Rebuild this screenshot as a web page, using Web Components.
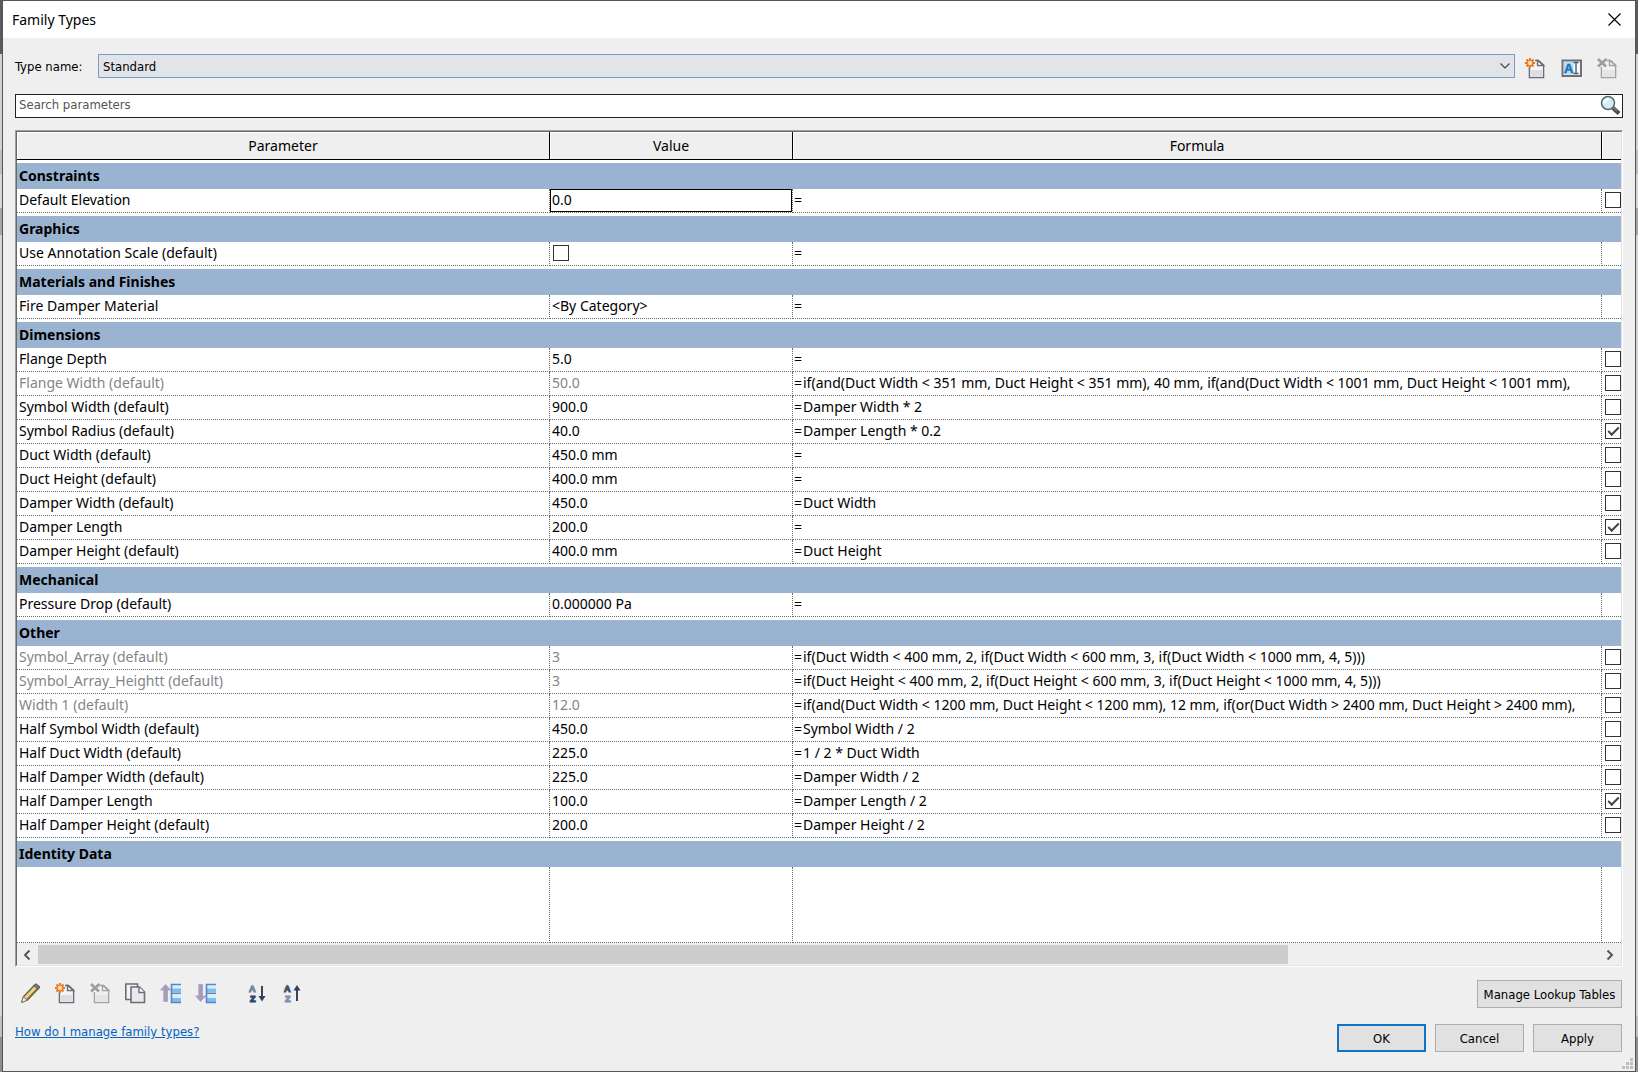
<!DOCTYPE html>
<html lang="en">
<head>
<meta charset="utf-8">
<meta name="viewport" content="width=device-width, initial-scale=1">
<title>Family Types</title>
<style>
  :root {
    --face: #efefef;
    --band: #9ab3d0;
    --line: #6a6a6a;
    --ui-font: "DejaVu Sans Condensed", "DejaVu Sans", sans-serif;
    --grid-font: "Noto Sans", "Open Sans", sans-serif;
  }

  body {
    background: linear-gradient(#5d5a5e 0 54px, #d2d2d2 54px 150px, #bdbdc8 150px 174px, #d8d8d8 174px 208px, #a6a6a6 208px 235px, #d6d6d6 235px 1016px, #c0c0c0 1016px 1037px, #8e8e8e 1037px);
    box-sizing: border-box;
    font: 13px/16px var(--ui-font);
    color: #000;
    margin: 0;
    min-height: 100vh;
    padding: 0 2px;
  }
</style>
</head>
<body>

<family-dialog>
  <span slot="title">Family Types</span>
  <type-bar></type-bar>
  <search-box></search-box>
  <param-grid></param-grid>
  <tool-strip>
    <push-button slot="end" wide>Manage Lookup Tables</push-button>
  </tool-strip>
  <dialog-footer>
    <a slot="help" href="#help">How do I manage family types?</a>
    <push-button default>OK</push-button>
    <push-button>Cancel</push-button>
    <push-button>Apply</push-button>
  </dialog-footer>
</family-dialog>

<script>
/* === ICONS ==================================================================================== */

const sheet = (stroke, light, dark) => /* html */ `
  <path d="M4.5 7.5V19.5H18.5V7L13.5 2.500H10" fill="none" stroke="${stroke}" stroke-width="1.6"/>
  <path d="M5.300 8H10L12 4 17.700 8V18.700H5.300Z" fill="${light}"/>
  <path d="M5.300 12H17.700V18.700H5.300Z" fill="${dark}"/>
  <path d="M12.500 2.500V7.500H18.500Z" fill="#fff" stroke="${stroke}" stroke-width="1.400"/>`;

const rows = /* html */ `
  <path d="M12 1.500H21V5.500H12Z M12 11H21V15H12Z" fill="#d8f0fc"/>
  <path d="M12 5.500H21V9H12Z M12 15H21V19H12Z" fill="#7fbdf0"/>
  <path d="M21 1.500H11.500V19.500H21M11.500 10.300H21" fill="none" stroke="#5a86c4" stroke-width="1.600"/>`;

const letters = (top, bottom) => /* html */ `
  <g font-family="Liberation Sans, sans-serif" font-size="9" font-weight="bold" stroke-width="1.200">
    <text x="2" y="9" fill="${top}" stroke="${top}">A</text>
    <text x="3" y="19" fill="${bottom}" stroke="${bottom}">Z</text>
  </g>`;

const ICONS = {
  new: sheet('#6c6e74', '#f3f4f8', '#dcdee6') + /* html */ `
    <path d="M5 0V10M0 5H10M1.500 1.500L8.500 8.500M8.500 1.500L1.500 8.500" stroke="#e8741c" stroke-width="1.800"/>
    <circle cx="5" cy="5" r="3" fill="#ffc58a" stroke="#e8741c" stroke-width="1.200"/>
    <circle cx="5" cy="5" r="1.500" fill="#ffe9cc"/>`,
  delete: sheet('#a5a2a5', '#f0eff1', '#e6e4e7') + /* html */ `
    <path d="M0 0H9.500V9H0Z" fill="#efefef"/>
    <path d="M1 1L9 8.500M9.500 1L1 8.500" stroke="#a09b9e" stroke-width="2.600"/>`,
  rename: /* html */ `
    <path d="M1.500 2.500H20V18H1.500Z" fill="#f4f8fc" stroke="#6d7075" stroke-width="2"/>
    <path d="M3 4H12.500V16.500H3Z" fill="#b5dcf5"/>
    <text x="3" y="15" font-family="Liberation Sans, sans-serif" font-size="13" font-weight="bold" fill="#2470b5" stroke="#2470b5" stroke-width=".5">A</text>
    <path d="M12.500 4.500H17.500M12.500 15.500H17.500M15 4.500V15.500" stroke="#555a62" stroke-width="1.400"/>`,
  find: /* html */ `
    <path d="M13 13L19 18.500" stroke="#4a4a4a" stroke-width="4.200"/>
    <path d="M13 12.500L17 16" stroke="#858585" stroke-width="1.300"/>
    <circle cx="8" cy="8" r="6.500" fill="#d5edf4" stroke="#59696f" stroke-width="1.500"/>
    <path d="M4.500 8.500A4 4 0 0 1 9 4.300" fill="none" stroke="#fff" stroke-width="2"/>`,
  edit: /* html */ `
    <path d="M2 19L3.500 13.500 14.500 2 18.500 5.500 7.500 17Z" fill="#d9b75e" stroke="#5f5a52" stroke-width="1.200"/>
    <path d="M5.500 15L16 4" stroke="#f5e0a0" stroke-width="1.600"/>
    <path d="M7 16.500L17.500 5.500" stroke="#8d6f2c" stroke-width="1.200"/>
    <path d="M1.500 19.500L3.300 13.800 7.500 17.200Z" fill="#f6f1e6" stroke="#77736c"/>
    <path d="M13.800 2.700L16 .7 20 4 18.200 6.200Z" fill="#77777d" stroke="#57575c"/>`,
  copy: /* html */ `
    <path d="M.8 1H12.500V16.500H.8Z" fill="#f2f3f6" stroke="#6c6e74" stroke-width="1.600"/>
    <path d="M6 4H14.500L19.500 9V19.500H6Z" fill="#e9eaf0" stroke="#6c6e74" stroke-width="1.600"/>
    <path d="M14 4V9.500H19.500" fill="#fff" stroke="#6c6e74" stroke-width="1.400"/>`,
  up: /* html */ `
    <path d="M5.500 1.500L10.500 7H7.500V18.500H3.800V7H.7Z" fill="#a39fa5" stroke="#b4a0de"/>${rows}`,
  down: /* html */ `
    <path d="M5.500 18.500L10.500 13H7.500V1.500H3.800V13H.7Z" fill="#a39fa5" stroke="#b4a0de"/>${rows}`,
  'sort-az': letters('#7389a3', '#2f4866') + /* html */ `
    <path d="M15 3V17" stroke="#3c4556" stroke-width="2"/>
    <path d="M11.500 13H18.500L15 18.500Z" fill="#2f4160"/>`,
  'sort-za': letters('#42566f', '#7c93b0') + /* html */ `
    <path d="M15 5V18" stroke="#3c4556" stroke-width="2"/>
    <path d="M11.500 7.500H18.500L15 2Z" fill="#2f4160"/>`,
  close: /* html */ `<path d="M4.500 4.500L16.500 16.500M16.500 4.500L4.500 16.500" stroke="#000" stroke-width="1.200"/>`,
};

/* === COMPONENTS =============================================================================== */

class BaseElement extends HTMLElement {
  css = () => '';
  html = () => '';

  render() {
    this.shadowRoot.innerHTML = `
      <style>
        *, ::before, ::after { box-sizing: border-box; }
        ${this.css().trim()}
      </style>
      ${this.html().trim()}`;
  }

  connectedCallback() {
    this.attachShadow({ mode: 'open' });
    this.render();
  }
}

//=============//
// ICON BUTTON //
//=============//

class IconButton extends BaseElement {
  css = () => /* css */ `
    :host { display: block; flex: none; }
    button { background: none; border: 0; display: block; height: 21px; padding: 0; width: 21px; }
    svg { display: block; }
  `;

  html = () => /* html */ `
    <button type="button" aria-label="${this.getAttribute('label')}">
      <svg width="21" height="21" viewBox="0 0 21 21" aria-hidden="true">${ICONS[this.getAttribute('icon')]}</svg>
    </button>
  `;
}

//=============//
// PUSH BUTTON //
//=============//

class PushButton extends BaseElement {
  css = () => /* css */ `
    :host { display: block; }
    button {
      background: #e1e1e1;
      border: 1px solid #adadad;
      color: #000;
      font: inherit;
      height: 28px;
      padding: 1px 0 0;
      width: 89px;
    }
    :host([wide]) button { width: 145px; }
    :host([default]) button { border: 2px solid #0f75c8; }
  `;

  html = () => /* html */ `<button type="button"><slot></slot></button>`;
}

//===============//
// FAMILY DIALOG //
//===============//

class FamilyDialog extends BaseElement {
  css = () => /* css */ `
    :host {
      background: var(--face);
      border: 1px solid #555;
      box-sizing: border-box;
      display: flex;
      flex-direction: column;
      min-height: 100vh;
      position: relative;
    }
    header {
      align-items: center;
      background: #fff;
      display: flex;
      font: 14px/20px var(--grid-font);
      height: 37px;
      justify-content: space-between;
      padding: 0 10px 0 9px;
    }
    main { display: flex; flex-direction: column; padding: 16px 12px 18px; }
    .grip { bottom: 2px; position: absolute; right: 2px; }
  `;

  html = () => /* html */ `
    <header>
      <slot name="title"></slot>
      <icon-button icon="close" label="Close"></icon-button>
    </header>
    <main><slot></slot></main>
    <svg class="grip" width="11" height="11" fill="#bfbfbf" aria-hidden="true">
      <path d="M8 0h3v3h-3z M4 4h3v3h-3z M8 4h3v3h-3z M0 8h3v3h-3z M4 8h3v3h-3z M8 8h3v3h-3z"/>
    </svg>
  `;
}

//==========//
// TYPE BAR //
//==========//

class TypeBar extends BaseElement {
  css = () => /* css */ `
    :host { align-items: flex-start; display: flex; padding-right: 5px; }
    label { flex: none; line-height: 26px; width: 83px; }
    .combo { align-items: center; display: grid; flex: 1; }
    .combo > * { grid-area: 1 / 1; }
    select {
      appearance: none;
      background: #e1e5e9;
      border: 1px solid #7a9cbf;
      border-radius: 0;
      color: #000;
      font: inherit;
      height: 24px;
      padding: 2px 24px 0 4px;
      width: 100%;
    }
    svg { justify-self: end; margin-right: 5px; pointer-events: none; }
    nav { display: flex; gap: 15px; padding: 4px 0 0 10px; }
  `;

  html = () => /* html */ `
    <label for="type">Type name:</label>
    <div class="combo">
      <select id="type"><option>Standard</option></select>
      <svg width="10" height="6"><path d="M.5 .5L5 5 9.500 .5" fill="none" stroke="#444" stroke-width="1.200"/></svg>
    </div>
    <nav>
      <icon-button icon="new" label="New type"></icon-button>
      <icon-button icon="rename" label="Rename type"></icon-button>
      <icon-button icon="delete" label="Delete type"></icon-button>
    </nav>
  `;
}

//============//
// SEARCH BOX //
//============//

class SearchBox extends BaseElement {
  css = () => /* css */ `
    :host {
      background: #fff;
      border: 1px solid #222;
      display: flex;
      height: 24px;
      box-sizing: border-box;
      margin: 14px 0 12px;
      padding-right: 1px;
    }
    input {
      background: none;
      border: 0;
      flex: 1;
      font: inherit;
      height: 19px;
      outline: 0;
      padding: 0 3px;
    }
    input::placeholder { color: #555; }
  `;

  html = () => /* html */ `
    <input type="text" placeholder="Search parameters" aria-label="Search parameters">
    <icon-button icon="find" label="Search"></icon-button>
  `;
}

//================//
// PARAMETER GRID //
//================//
/*
Each parameter is [name, value, formula, lock]:
- lock: true or false draws a tick box, null leaves the cell empty.
- a name that starts with '~' is read only and drawn grey.
*/

const GROUPS = {
  'Constraints': [
    ['Default Elevation', { edit: '0.0' }, '', false],
  ],
  'Graphics': [
    ['Use Annotation Scale (default)', { check: false }, '', null],
  ],
  'Materials and Finishes': [
    ['Fire Damper Material', '<By Category>', '', null],
  ],
  'Dimensions': [
    ['Flange Depth', '5.0', '', false],
    ['~Flange Width (default)', '50.0', 'if(and(Duct Width < 351 mm, Duct Height < 351 mm), 40 mm, if(and(Duct Width < 1001 mm, Duct Height < 1001 mm),', false],
    ['Symbol Width (default)', '900.0', 'Damper Width * 2', false],
    ['Symbol Radius (default)', '40.0', 'Damper Length * 0.2', true],
    ['Duct Width (default)', '450.0 mm', '', false],
    ['Duct Height (default)', '400.0 mm', '', false],
    ['Damper Width (default)', '450.0', 'Duct Width', false],
    ['Damper Length', '200.0', '', true],
    ['Damper Height (default)', '400.0 mm', 'Duct Height', false],
  ],
  'Mechanical': [
    ['Pressure Drop (default)', '0.000000 Pa', '', null],
  ],
  'Other': [
    ['~Symbol_Array (default)', '3', 'if(Duct Width < 400 mm, 2, if(Duct Width < 600 mm, 3, if(Duct Width < 1000 mm, 4, 5)))', false],
    ['~Symbol_Array_Heightt (default)', '3', 'if(Duct Height < 400 mm, 2, if(Duct Height < 600 mm, 3, if(Duct Height < 1000 mm, 4, 5)))', false],
    ['~Width 1 (default)', '12.0', 'if(and(Duct Width < 1200 mm, Duct Height < 1200 mm), 12 mm, if(or(Duct Width > 2400 mm, Duct Height > 2400 mm),', false],
    ['Half Symbol Width (default)', '450.0', 'Symbol Width / 2', false],
    ['Half Duct Width (default)', '225.0', '1 / 2 * Duct Width', false],
    ['Half Damper Width (default)', '225.0', 'Damper Width / 2', false],
    ['Half Damper Length', '100.0', 'Damper Length / 2', true],
    ['Half Damper Height (default)', '200.0', 'Damper Height / 2', false],
  ],
  'Identity Data': [],
};

const escapeText = (text) => text.replace(/&/g, '&amp;').replace(/</g, '&lt;').replace(/>/g, '&gt;');

class ParamGrid extends BaseElement {
  css = () => /* css */ `
    :host {
      border: 1px solid;
      border-color: #a0a0a0 #fff #fff #a0a0a0;
      display: block;
      font: 14px/20px var(--grid-font);
    }
    .well {
      background: #fff;
      border: 1px solid;
      border-color: #696969 #e3e3e3 #e3e3e3 #696969;
      overflow: hidden;
    }
    table { border-collapse: separate; border-spacing: 0; table-layout: fixed; width: 100%; }
    .name { width: 533px; }
    .value { width: 243px; }
    .lock { width: 19px; }

    thead th {
      background: var(--face);
      border-bottom: 1px solid #000;
      border-right: 1px solid #000;
      box-shadow: inset 1px 1px #fff;
      font-weight: normal;
      height: 28px;
      padding: 0;
    }
    thead th:last-child { border-right: 0; }

    .group th {
      background: var(--band);
      border-top: 3px solid #fff;
      height: 29px;
      padding: 0 2px;
      text-align: left;
    }

    td {
      border-bottom: 1px dotted var(--line);
      border-right: 1px dotted var(--line);
      height: 24px;
      overflow: hidden;
      padding: 0 2px 1px;
      white-space: nowrap;
    }
    td:last-child { border-right: 0; padding: 0 0 1px 3px; }
    .readonly td:nth-child(-n+2) { color: #858585; }
    td:nth-child(3) { padding-left: 1px; padding-right: 0; }
    .equals { display: inline-block; width: 9px; }
    .space td { height: 76px; }

    td.edit { padding: 0; vertical-align: top; }
    .edit input {
      border: 1px solid #000;
      display: block;
      font: inherit;
      height: 23px;
      outline: 0;
      padding: 0 1px 2px;
      width: 100%;
    }

    td.check { padding: 0 3px 1px; }
    input[type=checkbox] {
      appearance: none;
      background: #fff;
      border: 1px solid #333;
      display: block;
      height: 16px;
      margin: 0;
      width: 16px;
    }
    input:checked::after {
      border: solid #444;
      border-width: 0 0 2px 2px;
      content: "";
      display: block;
      height: 6px;
      margin: 3px 0 0 2px;
      transform: rotate(-45deg);
      width: 11px;
    }

    .scroll { background: var(--face); display: flex; height: 22px; padding: 2px 0 1px; }
    .scroll button { background: none; border: 0; flex: none; height: 19px; padding: 0; width: 21px; }
    .scroll svg { display: block; margin: 0 6px; }
    .track { flex: 1; }
    .thumb { background: #cdcdcd; height: 19px; width: 80%; }
  `;

  checkbox(label, on) {
    return `<input type="checkbox" aria-label="${label}"${on ? ' checked' : ''}>`;
  }

  valueCell(name, value) {
    if (value.edit) return `<td class="edit"><input type="text" value="${value.edit}" aria-label="${name}"></td>`;
    if ('check' in Object(value)) return `<td class="check">${this.checkbox(name, value.check)}</td>`;
    return `<td>${escapeText(value)}</td>`;
  }

  row([title, value, formula, lock]) {
    const name = title.replace('~', '');
    return /* html */ `
      <tr${title.startsWith('~') ? ' class="readonly"' : ''}>
        <td>${name}</td>
        ${this.valueCell(name, value)}
        <td><span class="equals">=</span>${escapeText(formula)}</td>
        <td>${lock === null ? '' : this.checkbox('Lock ' + name, lock)}</td>
      </tr>`;
  }

  group([title, params]) {
    return `<tr class="group"><th colspan="4">${title}</th></tr>` + params.map((p) => this.row(p)).join('');
  }

  html = () => /* html */ `
    <div class="well">
      <table>
        <colgroup><col class="name"><col class="value"><col><col class="lock"></colgroup>
        <thead><tr><th>Parameter</th><th>Value</th><th>Formula</th><th></th></tr></thead>
        <tbody>
          ${Object.entries(GROUPS).map((g) => this.group(g)).join('')}
          <tr class="space"><td></td><td></td><td></td><td></td></tr>
        </tbody>
      </table>
      <div class="scroll">
        <button type="button" aria-label="Scroll left">
          <svg width="8" height="10"><path d="M6.500 .5L2 5 6.500 9.500" fill="none" stroke="#555" stroke-width="2"/></svg>
        </button>
        <div class="track"><div class="thumb"></div></div>
        <button type="button" aria-label="Scroll right">
          <svg width="8" height="10"><path d="M1.500 .5L6 5 1.500 9.500" fill="none" stroke="#555" stroke-width="2"/></svg>
        </button>
      </div>
    </div>
  `;
}

//============//
// TOOL STRIP //
//============//

class ToolStrip extends BaseElement {
  css = () => /* css */ `
    :host { align-items: center; display: flex; justify-content: space-between; padding: 13px 1px 0 5px; }
    nav { display: flex; gap: 14px; padding-bottom: 2px; }
    .sort { margin-left: 17px; }
  `;

  html = () => /* html */ `
    <nav>
      <icon-button icon="edit" label="Edit parameter"></icon-button>
      <icon-button icon="new" label="New parameter"></icon-button>
      <icon-button icon="delete" label="Delete parameter"></icon-button>
      <icon-button icon="copy" label="Copy parameter"></icon-button>
      <icon-button icon="up" label="Move up"></icon-button>
      <icon-button icon="down" label="Move down"></icon-button>
      <icon-button class="sort" icon="sort-az" label="Sort ascending"></icon-button>
      <icon-button icon="sort-za" label="Sort descending"></icon-button>
    </nav>
    <slot name="end"></slot>
  `;
}

//===============//
// DIALOG FOOTER //
//===============//

class DialogFooter extends BaseElement {
  css = () => /* css */ `
    :host { display: flex; justify-content: space-between; padding: 16px 1px 0 0; }
    .buttons { display: flex; gap: 9px; }
    ::slotted(a) { color: #0563c1; }
  `;

  html = () => /* html */ `
    <slot name="help"></slot>
    <div class="buttons"><slot></slot></div>
  `;
}

customElements.define('icon-button', IconButton);
customElements.define('push-button', PushButton);
customElements.define('family-dialog', FamilyDialog);
customElements.define('type-bar', TypeBar);
customElements.define('search-box', SearchBox);
customElements.define('param-grid', ParamGrid);
customElements.define('tool-strip', ToolStrip);
customElements.define('dialog-footer', DialogFooter);
</script>
</body>
</html>
